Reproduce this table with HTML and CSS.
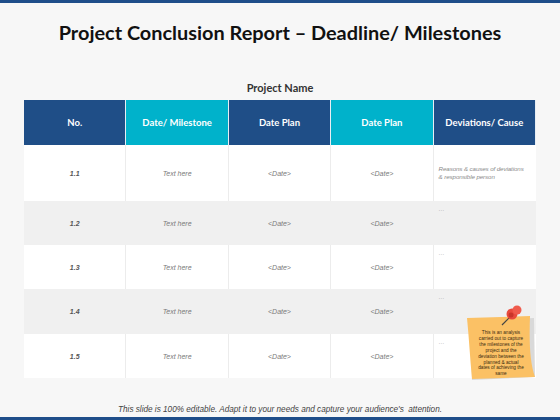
FILE: index.html
```html
<!DOCTYPE html>
<html>
<head>
<meta charset="utf-8">
<link rel="stylesheet" href="styles.css">
</head>
<body>
<div class="slide">
  <div class="topbar"></div>
  <h1 class="title">Project Conclusion Report – Deadline/ Milestones</h1>
  <div class="subtitle">Project Name</div>
  <div class="table">
    <div class="th dark">No.</div>
    <div class="th teal">Date/ Milestone</div>
    <div class="th dark">Date Plan</div>
    <div class="th teal">Date Plan</div>
    <div class="th dark">Deviations/ Cause</div>

    <div class="td num first">1.1</div>
    <div class="td first">Text here</div>
    <div class="td first">&lt;Date&gt;</div>
    <div class="td first">&lt;Date&gt;</div>
    <div class="td dev first center">Reasons &amp; causes of deviations<br>&amp; responsible person</div>

    <div class="td num alt">1.2</div>
    <div class="td alt">Text here</div>
    <div class="td alt">&lt;Date&gt;</div>
    <div class="td alt">&lt;Date&gt;</div>
    <div class="td dev alt">…</div>

    <div class="td num">1.3</div>
    <div class="td">Text here</div>
    <div class="td">&lt;Date&gt;</div>
    <div class="td">&lt;Date&gt;</div>
    <div class="td dev">…</div>

    <div class="td num alt">1.4</div>
    <div class="td alt">Text here</div>
    <div class="td alt">&lt;Date&gt;</div>
    <div class="td alt">&lt;Date&gt;</div>
    <div class="td dev alt">…</div>

    <div class="td num">1.5</div>
    <div class="td">Text here</div>
    <div class="td">&lt;Date&gt;</div>
    <div class="td">&lt;Date&gt;</div>
    <div class="td dev">…</div>

    <div class="note">
      <svg class="note-bg" width="72" height="70" viewBox="0 0 72 70">
        <polygon points="6,8 70,5 71,64 8,67" fill="#d9d9d9"/>
        <path d="M3,5 L66,3 C65,30 66,50 71,64 L8,66 C6,45 5,25 3,5 Z" fill="#fbc165"/>
      </svg>
      <svg class="pin" width="24" height="22" viewBox="0 0 24 22">
        <line x1="2" y1="20" x2="11" y2="11" stroke="#444" stroke-width="1.2"/>
        <circle cx="12" cy="9" r="5.5" fill="#e84a3c"/>
        <circle cx="17" cy="5" r="4.5" fill="#ef5b4c"/>
        <circle cx="11" cy="10" r="2.5" fill="#c9352a"/>
      </svg>
      <div class="note-text">This is an analysis carried out to capture the milestones of the project and the deviation between the planned &amp; actual dates of achieving the same</div>
    </div>
  </div>
  <div class="footer">This slide is 100% editable. Adapt it to your needs and capture your audience's&nbsp; attention.</div>
  <div class="bottombar"></div>
</div>
</body>
</html>
```
FILE: styles.css
```css
* { box-sizing: border-box; }
html, body { margin: 0; padding: 0; }
body {
  width: 560px;
  height: 420px;
  background: #f7f7f7;
  font-family: "Liberation Sans", Arial, sans-serif;
  overflow: hidden;
}
.slide {
  width: 560px;
  height: 420px;
  display: flex;
  flex-direction: column;
}
.topbar { height: 3px; background: #1f4e8a; flex: none; }
.title {
  margin: 16px 0 0 0;
  height: 26px;
  line-height: 26px;
  text-align: center;
  font-family: Lato, sans-serif;
  font-weight: bold;
  font-size: 19.9px;
  color: #111;
}
.subtitle {
  margin-top: 35px;
  height: 16px;
  line-height: 16px;
  text-align: center;
  font-family: Lato, sans-serif;
  font-weight: bold;
  font-size: 11px;
  color: #333;
}
.table {
  position: relative;
  margin: 4px 0 0 24px;
  width: 512px;
  display: grid;
  grid-template-columns: repeat(5, 1fr);
  grid-template-rows: 45px 56px 44px 44px 45px 44px;
}
.th {
  display: flex;
  align-items: center;
  justify-content: center;
  color: #fff;
  font-family: Lato, sans-serif;
  font-weight: bold;
  font-size: 9.5px;
  border-right: 1px solid #e8eef4;
}
.th:last-child { border-right: none; }
.dark { background: #1f4e87; }
.teal { background: #00b2cb; }
.td {
  display: flex;
  align-items: center;
  justify-content: center;
  background: #fff;
  border-right: 1px solid #ececec;
  font-style: italic;
  font-size: 7px;
  color: #7a7a7a;
}
.td.alt { background: #f0f0f0; border-right-color: #f0f0f0; }
.td.num { color: #555; font-weight: bold; font-size: 7px; }
.td.dev {
  border-right: none;
  justify-content: flex-start;
  align-items: flex-start;
  padding: 4px 2px 0 5px;
  font-size: 6.2px;
  line-height: 8px;
  letter-spacing: -0.1px;
  color: #8a8a8a;
  white-space: nowrap;
}
.td.dev.center { align-items: center; padding-top: 0; }
.note {
  position: absolute;
  left: 440px;
  top: 213px;
  width: 72px;
  height: 70px;
}
.note-bg { position: absolute; left: 0; top: 0; }
.pin { position: absolute; left: 36px; top: -8px; }
.note-text {
  position: absolute;
  left: 14px;
  top: 17px;
  width: 46px;
  text-align: center;
  font-size: 4.7px;
  line-height: 5.9px;
  color: #3a2a10;
}
.footer {
  margin-top: 26px;
  text-align: center;
  font-style: italic;
  font-size: 8.2px;
  color: #444;
  height: 12px;
  line-height: 12px;
}
.bottombar { margin-top: auto; height: 3px; background: #1f4e8a; flex: none; }
```
